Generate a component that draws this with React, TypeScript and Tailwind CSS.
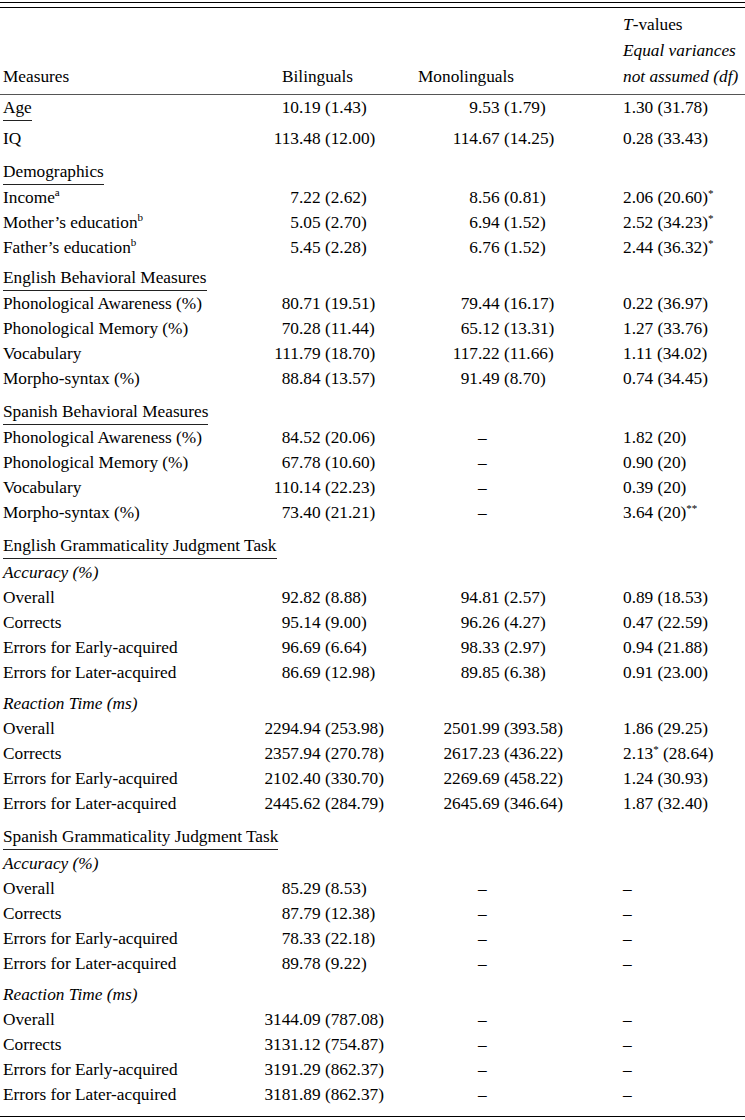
import React from 'react';

type Line =
  | { kind: 'section'; label: string; gap?: string }
  | { kind: 'sub'; label: string; gap?: string }
  | { kind: 'row'; label: string; sup?: string; bi: string; mono: string; t: string; gap?: string; underline?: boolean };

const rows: Line[] = [
  { kind: 'row', label: 'Age', bi: '10.19 (1.43)', mono: '9.53 (1.79)', t: '1.30 (31.78)', underline: true },
  { kind: 'row', label: 'IQ', bi: '113.48 (12.00)', mono: '114.67 (14.25)', t: '0.28 (33.43)', gap: 'mt-[5px]' },
  { kind: 'section', label: 'Demographics' },
  { kind: 'row', label: 'Income', sup: 'a', bi: '7.22 (2.62)', mono: '8.56 (0.81)', t: '2.06 (20.60)*' },
  { kind: 'row', label: 'Mother’s education', sup: 'b', bi: '5.05 (2.70)', mono: '6.94 (1.52)', t: '2.52 (34.23)*' },
  { kind: 'row', label: 'Father’s education', sup: 'b', bi: '5.45 (2.28)', mono: '6.76 (1.52)', t: '2.44 (36.32)*' },
  { kind: 'section', label: 'English Behavioral Measures', gap: 'mt-[5px]' },
  { kind: 'row', label: 'Phonological Awareness (%)', bi: '80.71 (19.51)', mono: '79.44 (16.17)', t: '0.22 (36.97)' },
  { kind: 'row', label: 'Phonological Memory (%)', bi: '70.28 (11.44)', mono: '65.12 (13.31)', t: '1.27 (33.76)' },
  { kind: 'row', label: 'Vocabulary', bi: '111.79 (18.70)', mono: '117.22 (11.66)', t: '1.11 (34.02)' },
  { kind: 'row', label: 'Morpho-syntax (%)', bi: '88.84 (13.57)', mono: '91.49 (8.70)', t: '0.74 (34.45)' },
  { kind: 'section', label: 'Spanish Behavioral Measures' },
  { kind: 'row', label: 'Phonological Awareness (%)', bi: '84.52 (20.06)', mono: '–', t: '1.82 (20)' },
  { kind: 'row', label: 'Phonological Memory (%)', bi: '67.78 (10.60)', mono: '–', t: '0.90 (20)' },
  { kind: 'row', label: 'Vocabulary', bi: '110.14 (22.23)', mono: '–', t: '0.39 (20)' },
  { kind: 'row', label: 'Morpho-syntax (%)', bi: '73.40 (21.21)', mono: '–', t: '3.64 (20)**' },
  { kind: 'section', label: 'English Grammaticality Judgment Task' },
  { kind: 'sub', label: 'Accuracy (%)', gap: 'mt-[1px]' },
  { kind: 'row', label: 'Overall', bi: '92.82 (8.88)', mono: '94.81 (2.57)', t: '0.89 (18.53)' },
  { kind: 'row', label: 'Corrects', bi: '95.14 (9.00)', mono: '96.26 (4.27)', t: '0.47 (22.59)' },
  { kind: 'row', label: 'Errors for Early-acquired', bi: '96.69 (6.64)', mono: '98.33 (2.97)', t: '0.94 (21.88)' },
  { kind: 'row', label: 'Errors for Later-acquired', bi: '86.69 (12.98)', mono: '89.85 (6.38)', t: '0.91 (23.00)' },
  { kind: 'sub', label: 'Reaction Time (ms)' },
  { kind: 'row', label: 'Overall', bi: '2294.94 (253.98)', mono: '2501.99 (393.58)', t: '1.86 (29.25)' },
  { kind: 'row', label: 'Corrects', bi: '2357.94 (270.78)', mono: '2617.23 (436.22)', t: '2.13* (28.64)' },
  { kind: 'row', label: 'Errors for Early-acquired', bi: '2102.40 (330.70)', mono: '2269.69 (458.22)', t: '1.24 (30.93)' },
  { kind: 'row', label: 'Errors for Later-acquired', bi: '2445.62 (284.79)', mono: '2645.69 (346.64)', t: '1.87 (32.40)' },
  { kind: 'section', label: 'Spanish Grammaticality Judgment Task' },
  { kind: 'sub', label: 'Accuracy (%)', gap: 'mt-[1px]' },
  { kind: 'row', label: 'Overall', bi: '85.29 (8.53)', mono: '–', t: '–' },
  { kind: 'row', label: 'Corrects', bi: '87.79 (12.38)', mono: '–', t: '–' },
  { kind: 'row', label: 'Errors for Early-acquired', bi: '78.33 (22.18)', mono: '–', t: '–' },
  { kind: 'row', label: 'Errors for Later-acquired', bi: '89.78 (9.22)', mono: '–', t: '–' },
  { kind: 'sub', label: 'Reaction Time (ms)' },
  { kind: 'row', label: 'Overall', bi: '3144.09 (787.08)', mono: '–', t: '–' },
  { kind: 'row', label: 'Corrects', bi: '3131.12 (754.87)', mono: '–', t: '–' },
  { kind: 'row', label: 'Errors for Early-acquired', bi: '3191.29 (862.37)', mono: '–', t: '–' },
  { kind: 'row', label: 'Errors for Later-acquired', bi: '3181.89 (862.37)', mono: '–', t: '–' },
];

// asterisks sit raised and small, like the journal's significance marks
const Stars = ({ text }: { text: string }) => (
  <>
    {text.split(/(\*+)/).map((part, i) =>
      part.startsWith('*') ? (
        <sup key={i} className="text-[11px] top-[-6px]">{part}</sup>
      ) : (
        <span key={i}>{part}</span>
      )
    )}
  </>
);

// integer part in a fixed box so the decimal points line up
const Num = ({ value, intWidth }: { value: string; intWidth: string }) => {
  const dot = value.indexOf('.');
  const int = dot === -1 ? '' : value.slice(0, dot);
  const rest = dot === -1 ? value : value.slice(dot);
  return (
    <div className="flex whitespace-nowrap">
      <span className={`${intWidth} text-right shrink-0`}>{int}</span>
      <span>
        <Stars text={rest} />
      </span>
    </div>
  );
};

const grid = 'grid grid-cols-[247px_168px_205px_1fr] pl-[3px]';

const App: React.FC = () => {
  return (
    <div className="w-[745px] h-[1120px] bg-white text-black font-['Liberation_Serif','Times_New_Roman',serif] text-[17.3px]">
      {/* top double rule */}
      <div className="mt-[2px] h-[6px] border-y border-black" />

      {/* Header */}
      <div className={`${grid} pt-[4px] pb-[4px] leading-[26px] border-b-[1.5px] border-[#555]`}>
        <div className="self-end">Measures</div>
        <div className="self-end pl-[32px]">Bilinguals</div>
        <div className="self-end">Monolinguals</div>
        <div className="whitespace-nowrap">
          <div>
            <i>T</i>-values
          </div>
          <div className="italic">Equal variances</div>
          <div className="italic">not assumed (df)</div>
        </div>
      </div>

      {/* Body */}
      <div className="leading-[25px]">
        {rows.map((r, idx) => {
          if (r.kind === 'section') {
            return (
              <div key={idx} className={`pl-[3px] ${r.gap ?? 'mt-[8px]'}`}>
                <span className="inline-block leading-[24px] border-b border-[#222]">{r.label}</span>
              </div>
            );
          }
          if (r.kind === 'sub') {
            return (
              <div key={idx} className={`pl-[3px] italic ${r.gap ?? 'mt-[6px]'}`}>
                {r.label}
              </div>
            );
          }
          return (
            <div key={idx} className={`${grid} ${r.gap ?? ''}`}>
              <div className="whitespace-nowrap">
                {r.underline ? (
                  <span className="inline-block leading-[24px] border-b border-[#222]">{r.label}</span>
                ) : (
                  r.label
                )}
                {r.sup && <sup className="text-[11px] top-[-7px]">{r.sup}</sup>}
              </div>
              <Num value={r.bi} intWidth="w-[49px]" />
              <Num value={r.mono} intWidth="w-[60px]" />
              <div className="whitespace-nowrap">
                <Stars text={r.t} />
              </div>
            </div>
          );
        })}
      </div>

      {/* bottom double rule */}
      <div className="mt-[9px] h-[6px] border-y border-black" />
    </div>
  );
};

export default App;
